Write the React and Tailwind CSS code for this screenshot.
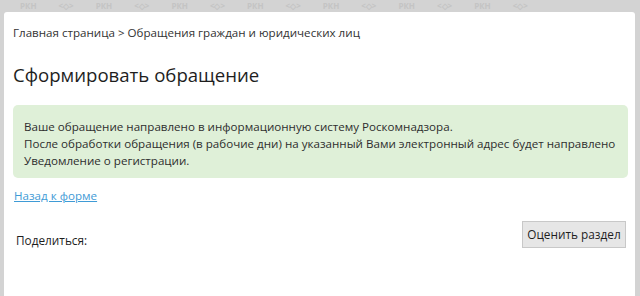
export default function App() {
  const logos = [];
  for (let i = 0; i < 7; i++) {
    logos.push(
      <span key={"a" + i} className="flex gap-[22px]">
        <span>РКН</span>
        <span>&lt;◇&gt;</span>
      </span>
    );
  }
  return (
    <div className="w-[640px] h-[296px] overflow-hidden bg-[#d3d3d3] flex flex-col" style={{ fontFamily: '"Open Sans", sans-serif' }}>
      <div className="h-[12px] shrink-0 flex items-center gap-[22px] pl-[20px] pr-[20px] text-[8px] font-bold leading-[12px] text-[#c4c4c4] overflow-hidden whitespace-nowrap">
        {logos}
      </div>
      <div className="ml-[4px] mr-[5px] flex-1 bg-white rounded-t-[3px] pl-[9px] pr-[7px] pt-[13px] text-[#333]">
        <div className="text-[11.6px] leading-[16px] text-[#333]">Главная страница &gt; Обращения граждан и юридических лиц</div>
        <h1 className="mt-[22px] text-[18.6px] leading-[24px] text-[#1e1e1e]">Сформировать обращение</h1>
        <div className="mt-[18px] bg-[#dff0d8] rounded-[5px] px-[11px] pt-[13px] pb-[9px] text-[11.6px] leading-[17px] text-[#2e2e2e]">
          <div>Ваше обращение направлено в информационную систему Роскомнадзора.</div>
          <div>После обработки обращения (в рабочие дни) на указанный Вами электронный адрес будет направлено</div>
          <div>Уведомление о регистрации.</div>
        </div>
        <a href="#" className="block mt-[10px] ml-[1px] text-[11.6px] leading-[16px] text-[#3f9bd6] underline w-fit">Назад к форме</a>
        <div className="mt-[17px] flex items-start justify-between">
          <div className="mt-[11px] ml-[3px] text-[11.8px] leading-[16px] text-[#1e1e1e]">Поделиться:</div>
          <button className="mr-[2px] h-[27px] w-[104px] bg-[#e6e6e6] border border-[#c8c8c8] text-[11.8px] text-[#1e1e1e]">Оценить раздел</button>
        </div>
      </div>
    </div>
  );
}
